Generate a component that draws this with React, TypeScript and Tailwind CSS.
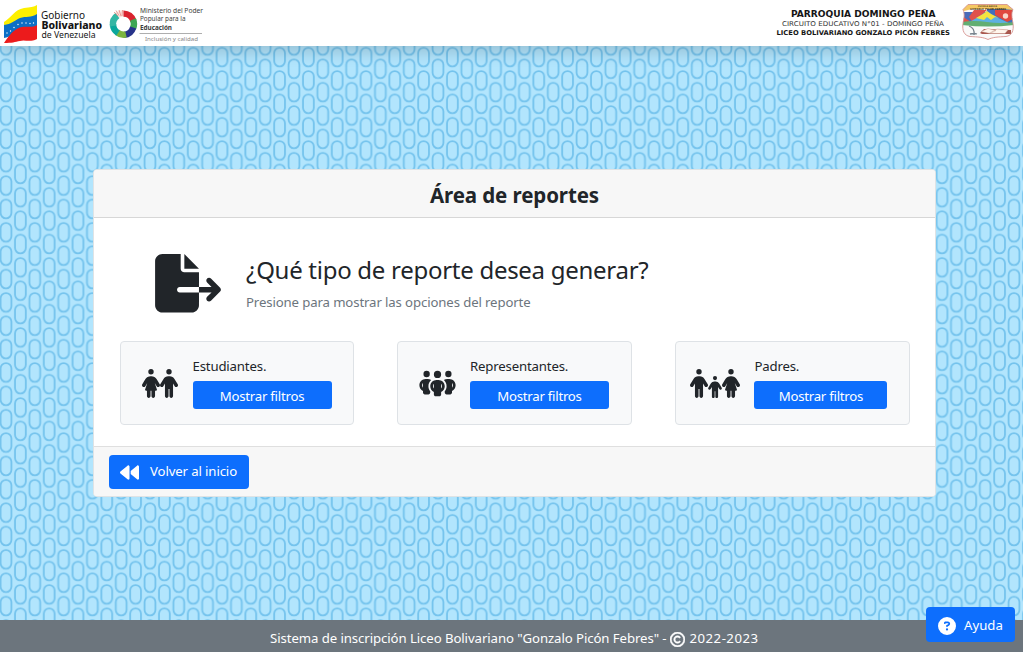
import type { ReactNode } from "react";
import {
  FaFileExport,
  FaPerson,
  FaPersonDress,
  FaPeopleGroup,
  FaBackward,
  FaCircleQuestion,
  FaRegCopyright,
} from "react-icons/fa6";

function PatternBackdrop() {
  return (
    <svg className="absolute inset-0 h-full w-full" aria-hidden="true">
      <defs>
        <pattern id="links" x="6" y="57.4" width="28.8" height="23.36" patternUnits="userSpaceOnUse">
          <rect width="28.8" height="23.36" fill="#b2e5fd" />
          <g fill="none" stroke="#74c3ed" strokeWidth="1.8">
            <rect x="-5.4" y="2" width="10.8" height="18.8" rx="5.4" />
            <rect x="23.4" y="2" width="10.8" height="18.8" rx="5.4" />
            <rect x="9" y="-9.68" width="10.8" height="18.8" rx="5.4" />
            <rect x="9" y="13.68" width="10.8" height="18.8" rx="5.4" />
          </g>
        </pattern>
      </defs>
      <rect width="100%" height="100%" fill="url(#links)" />
    </svg>
  );
}

function GovernmentLogo() {
  return (
    <svg width="210" height="46" viewBox="0 0 210 46" className="shrink-0" fontFamily="Noto Sans, sans-serif">
      <path d="M4 22C12 17 14 10 24 8c6-1 10-1 13-3v13c-7 5-11 3-17 5-7 2-9 6-16 8z" fill="#fdf000" />
      <path d="M4 25c7-1 10-4 16-7 6-2 11 0 17-4v14c-7 4-12 0-19 4-6 3-8 5-14 6z" fill="#0b6fc6" />
      <path d="M4 43l2-3c5-7 10-12 16-13 6-1 10 1 15-2v14c-8 4-12 0-17 2-5 1-8 2-16 2z" fill="#ec1b1c" />
      <g fill="#fff">
        <circle cx="7" cy="33" r=".7" /><circle cx="10.500" cy="31" r=".7" /><circle cx="14" cy="27.500" r=".7" />
        <circle cx="18" cy="24.500" r=".7" /><circle cx="22" cy="23" r=".7" /><circle cx="26" cy="23" r=".7" />
        <circle cx="30" cy="23.500" r=".7" /><circle cx="33.500" cy="23" r=".7" />
      </g>
      <g fill="#141414">
        <text x="41" y="19" fontSize="10" textLength="44" lengthAdjust="spacingAndGlyphs">Gobierno</text>
        <text x="41.500" y="28.500" fontSize="10" fontWeight="800" textLength="60.500" lengthAdjust="spacingAndGlyphs">Bolivariano</text>
        <text x="41.500" y="37.500" fontSize="9.6" textLength="54" lengthAdjust="spacingAndGlyphs">de Venezuela</text>
      </g>
      <g fill="none" strokeWidth="6.400">
        <path d="M117 15.500A10.500 10.800 0 0 1 124 13.200" stroke="#fbe3df" />
        <path d="M123.500 13.600A10.500 10.800 0 0 1 133.500 21" stroke="#d9232e" />
        <path d="M133 19.500A10.500 10.800 0 0 1 133 28.500" stroke="#3fa653" />
        <path d="M133.200 27.500A10.500 10.800 0 0 1 124 34.900" stroke="#27338a" />
        <path d="M126 34.500A10.500 10.800 0 0 1 117 32.300" stroke="#7bb43f" />
        <path d="M118 33A10.500 10.800 0 0 1 113 24" stroke="#0ba79c" />
        <path d="M113 26A10.500 10.800 0 0 1 117.500 15.500" stroke="#35b6a4" />
      </g>
      <path d="M114 12l4 4M116 10.500l3 5M119 10l2 6M122.500 10l-.5 6" stroke="#e88980" strokeWidth=".8" />
      <g fill="#3d3d3d" fontSize="6.4">
        <text x="140" y="12.800" textLength="63" lengthAdjust="spacingAndGlyphs">Ministerio del Poder</text>
        <text x="140" y="21.300" textLength="45.500" lengthAdjust="spacingAndGlyphs">Popular para la</text>
        <text x="140" y="30" fontWeight="700" textLength="32" lengthAdjust="spacingAndGlyphs">Educación</text>
        <text x="145" y="40.600" fontSize="6" fill="#858585" textLength="53" lengthAdjust="spacingAndGlyphs">Inclusión y calidad</text>
      </g>
      <path d="M139.500 33.500H202" stroke="#999" strokeWidth=".8" />
    </svg>
  );
}

function SchoolLogo() {
  return (
    <svg width="253" height="46" viewBox="0 0 253 46" className="shrink-0" fontFamily="DejaVu Sans, sans-serif">
      <g fill="#151515">
        <text x="21" y="16.500" fontSize="8.6" fontWeight="700" textLength="144.500" lengthAdjust="spacingAndGlyphs">PARROQUIA DOMINGO PEÑA</text>
        <text x="12" y="26" fontSize="6.6" fill="#333" textLength="162" lengthAdjust="spacingAndGlyphs">CIRCUITO EDUCATIVO N°01 - DOMINGO PEÑA</text>
        <text x="6.500" y="35.200" fontSize="6.6" fontWeight="700" textLength="173.500" lengthAdjust="spacingAndGlyphs">LICEO BOLIVARIANO GONZALO PICÓN FEBRES</text>
      </g>
      <clipPath id="crest">
        <path d="M198 4.500H237L243 9.500c-2 4-1 8 0 14 1 7-1 12-7 13-8 .5-13 .5-18 3-5-2.500-10-2.500-18-3-6-1-8-6-7-13 1-6 2-9 0-14z" />
      </clipPath>
      <g clipPath="url(#crest)">
        <path d="M190 0h55v46h-55z" fill="#fafafa" />
        <path d="M192 12h25v12h-25z" fill="#4a6cba" />
        <path d="M204 10h13l-14 13-4-6z" fill="#e0524c" />
        <path d="M192 16l12 8h-12z" fill="#e0524c" />
        <path d="M217 9h28v15h-28z" fill="#416fbc" />
        <path d="M225 10h18v9l-6 3-12-7z" fill="#e0483f" />
        <path d="M190 3h55v7l-13-1h-30l-12 3z" fill="#f4c863" />
        <path d="M196 24l14-8 7-5 7 5 17 8z" fill="#5db0e2" />
        <path d="M206 18l7-4 4-3 4 3 8 4-4-1-4 3-4-3-3 3z" fill="#f4e43f" />
        <path d="M192 22q12-2 25 0t27 0v3q-26 3-52 0z" fill="#62ae72" />
        <circle cx="235.500" cy="16" r="2.700" fill="#f9d6c9" />
      </g>
      <path d="M210 33l4-4 27 1v4h-29z" fill="#a9574e" />
      <path d="M211 31.500l7-3 8 2-6 3zM219 33.500l8-4.500 11 1-3 3.500z" fill="#fff6ed" stroke="#ba8a7d" strokeWidth=".4" />
      <path d="M199 26q6 2 5 9M200 34q4-1 7 0" fill="none" stroke="#77838d" strokeWidth="1.300" />
      <path d="M198 4.500H237L243 9.500c-2 4-1 8 0 14 1 7-1 12-7 13-8 .5-13 .5-18 3-5-2.500-10-2.500-18-3-6-1-8-6-7-13 1-6 2-9 0-14z" fill="none" stroke="#d69390" strokeWidth=".9" />
      <text x="208" y="6.800" fontSize="2.400" fontWeight="700" fill="#62491d" textLength="19" lengthAdjust="spacingAndGlyphs">ESCUELA BÁSICA</text>
      <text x="200" y="9.600" fontSize="2.800" fontWeight="700" fill="#4b3713" textLength="36" lengthAdjust="spacingAndGlyphs">GONZALO PICÓN FEBRES</text>
    </svg>
  );
}

type ReportCardProps = { title: string; icon: ReactNode; iconClass: string; buttonClass: string };

function ReportCard({ title, icon, iconClass, buttonClass }: ReportCardProps) {
  return (
    <div className="flex h-[84px] w-[234.600px] rounded-[4px] border border-[#dee2e6] bg-[#f8f9fa]">
      <div className={`flex shrink-0 items-end pb-[26px] ${iconClass}`}>{icon}</div>
      <div className="pt-[14px]">
        <p className="h-[25px] text-[13.2px] leading-[21px] tracking-[-0.16px]">{title}</p>
        <button className={`block h-7 rounded-[3px] bg-[#0d6efd] pt-0.5 text-[13.2px] leading-[21px] tracking-[-0.24px] text-white ${buttonClass}`}>
          Mostrar filtros
        </button>
      </div>
    </div>
  );
}

export default function App() {
  return (
    <div className="relative flex h-[652px] w-full flex-col overflow-hidden font-['Noto_Sans',sans-serif] text-[#212529]">
      <PatternBackdrop />
      <header className="relative flex h-[46px] shrink-0 justify-between bg-white shadow-[0_7px_14px_rgba(0,0,0,0.15)]">
        <GovernmentLogo />
        <SchoolLogo />
      </header>

      <main className="relative flex-1 pt-[123px] pl-[93px]">
        <section className="flex h-[328px] w-[843px] flex-col overflow-hidden rounded-[4px] border border-[#dfe3e5] bg-white">
          <div className="flex h-12 shrink-0 justify-center border-b border-[#d7d7d7] bg-[#f7f7f7] pt-[10px]">
            <h1 className="text-[20.5px] leading-[30px] font-bold tracking-[-0.1px]">Área de reportes</h1>
          </div>
          <div className="flex-1 pr-[25px] pl-[25.500px] pt-9">
            <div className="flex h-[87px]">
              <FaFileExport className="ml-[35.500px] h-[58.500px] w-[66px] shrink-0" />
              <div className="ml-[25px]">
                <h2 className="h-[38px] text-[24px] leading-[32px] tracking-[-0.28px]">¿Qué tipo de reporte desea generar?</h2>
                <p className="text-[13.2px] leading-[21px] tracking-[-0.12px] text-[#6c757d]">Presione para mostrar las opciones del reporte</p>
              </div>
            </div>
            <div className="flex justify-between">
              <ReportCard
                title="Estudiantes."
                iconClass="w-[72px] pl-[21px]"
                buttonClass="w-[139px]"
                icon={<><FaPersonDress className="h-[29px] w-[18px]" /><FaPerson className="h-[29px] w-[18px]" /></>}
              />
              <ReportCard
                title="Representantes."
                iconClass="w-[71.500px] pl-[21px]"
                buttonClass="w-[139px]"
                icon={<FaPeopleGroup className="h-[29px] w-[37px]" />}
              />
              <ReportCard
                title="Padres."
                iconClass="w-[78px] pl-[14px]"
                buttonClass="w-[133px]"
                icon={<><FaPerson className="h-[29px] w-[18px]" /><FaPerson className="h-[22px] w-[14px]" /><FaPersonDress className="h-[29px] w-[18px]" /></>}
              />
            </div>
          </div>
          <div className="h-[50px] shrink-0 border-t border-[#dfdfdf] bg-[#f7f7f7] pt-2 pl-[15px]">
            <button className="flex h-[34px] w-[140px] items-center rounded-[4px] bg-[#0d6efd] pl-[11px] text-[13.2px] tracking-[-0.12px] text-white">
              <FaBackward className="mr-[11px] h-[19px] w-[19px]" />
              Volver al inicio
            </button>
          </div>
        </section>
      </main>

      <footer className="relative flex h-8 shrink-0 items-center bg-[#6c757d] pt-1.5 pl-[270px] text-[13.2px] tracking-[-0.08px] text-white">
        <span>Sistema de inscripción Liceo Bolivariano "Gonzalo Picón Febres" -</span>
        <FaRegCopyright className="mx-1 h-[15px] w-[15px]" strokeWidth={18} />
        <span className="tracking-[0.5px]">2022-2023</span>
      </footer>

      <button className="absolute top-[607px] left-[926px] flex h-[35px] w-[89px] items-center rounded-[4px] bg-[#0d6efd] pt-0.5 pl-3 text-[13.2px] text-white">
        <FaCircleQuestion className="mr-2 h-[18px] w-[18px]" />
        Ayuda
      </button>
    </div>
  );
}
